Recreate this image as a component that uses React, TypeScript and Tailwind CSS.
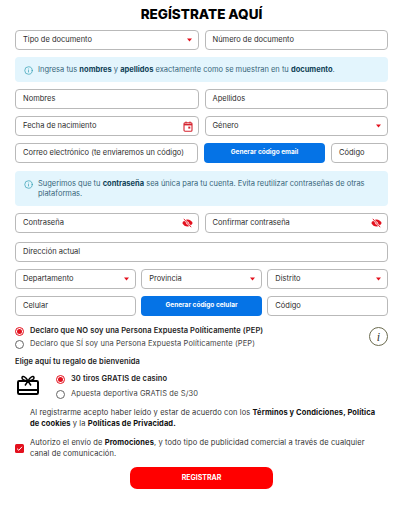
import { Info } from 'lucide-react'
import type { ReactNode } from 'react'

const FIELD = 'h-5 rounded-[4px] border border-[#b9b9b9] bg-white flex items-center justify-between pl-[7px] pr-[5px] text-[7.5px] text-[#2c2c2c]'

function Field({ label, icon, className = '' }: { label: string; icon?: ReactNode; className?: string }) {
  return (
    <div className={`${FIELD} ${className}`}>
      <span className="whitespace-nowrap">{label}</span>
      {icon}
    </div>
  )
}

const Caret = () => (
  <svg width="5" height="4" viewBox="0 0 5 4" className="mr-[1px]">
    <path d="M0 .5h5L2.500 3.500z" fill="#e3101d" />
  </svg>
)

const CalendarIcon = () => (
  <svg width="10" height="11" viewBox="0 0 10 11" fill="none">
    <rect x="1" y="1.800" width="8" height="8.400" rx="1" stroke="#d5232f" strokeWidth="1.100" />
    <path d="M1 3.600h8" stroke="#d5232f" strokeWidth="1.600" />
    <path d="M3 .5v2M7 .5v2" stroke="#d5232f" strokeWidth="1" />
    <rect x="5.300" y="5.600" width="2" height="2" fill="#d5232f" />
  </svg>
)

const EyeIcon = () => (
  <svg width="11" height="10" viewBox="0 0 11 10" fill="none">
    <path d="M.3 5C1.500 2.600 3.300 1.400 5.500 1.400S9.500 2.600 10.700 5C9.500 7.400 7.700 8.600 5.500 8.600S1.500 7.400.3 5z" fill="#e3101d" />
    <circle cx="5.500" cy="5" r="1.500" fill="#ffb3b3" />
    <path d="M1.800.8l7.400 8.400" stroke="#fff" strokeWidth="1.800" />
    <path d="M1.800.8l7.400 8.400" stroke="#e3101d" strokeWidth=".9" />
  </svg>
)

const Radio = ({ on }: { on?: boolean }) => (
  <span className={`w-[9px] h-[9px] rounded-full border flex items-center justify-center shrink-0 ${on ? 'border-[#e3101d]' : 'border-[#666666]'}`}>
    {on && <span className="w-[5px] h-[5px] rounded-full bg-[#e3101d]" />}
  </span>
)

function Notice({ children, className = '' }: { children: ReactNode; className?: string }) {
  return (
    <div className={`rounded-[4px] bg-[#e3f5fd] flex gap-[5px] pl-[9px] pr-2 text-[7.5px] leading-[10px] text-[#37657a] ${className}`}>
      <Info size={9} color="#2a9bb0" strokeWidth={1.800} className="shrink-0 mt-[1px]" />
      <p>{children}</p>
    </div>
  )
}

export default function App() {
  return (
    <div className="w-[402px] h-[512px] bg-white font-['Inter',sans-serif] pl-[15px] pr-[14px] overflow-hidden">
      <h1 className="text-center text-[13.500px] leading-[28px] font-extrabold text-black h-[30px]">REGÍSTRATE AQUÍ</h1>

      <div className="grid grid-cols-2 gap-x-[6px]">
        <Field label="Tipo de documento" icon={<Caret />} />
        <Field label="Número de documento" />
      </div>

      <Notice className="h-[25px] items-center mt-[7px]">
        Ingresa tus <b className="text-[#0f4257]">nombres</b> y <b className="text-[#0f4257]">apellidos</b> exactamente como se muestran en tu <b className="text-[#0f4257]">documento</b>.
      </Notice>

      <div className="grid grid-cols-2 gap-x-[6px] gap-y-[7px] mt-[7px]">
        <Field label="Nombres" />
        <Field label="Apellidos" />
        <Field label="Fecha de nacimiento" icon={<CalendarIcon />} />
        <Field label="Género" icon={<Caret />} />
      </div>

      <div className="flex gap-[6px] mt-[7px]">
        <Field label="Correo electrónico (te enviaremos un código)" className="w-[183px]" />
        <button className="w-[121px] h-5 rounded-[4px] bg-[#0573e6] text-white text-[6.500px] font-bold">Generar código email</button>
        <Field label="Código" className="flex-1" />
      </div>

      <Notice className="h-[35px] pt-[8px] mt-[8px]">
        Sugerimos que tu <b className="text-[#0f4257]">contraseña</b> sea única para tu cuenta. Evita reutilizar contraseñas de otras plataformas.
      </Notice>

      <div className="grid grid-cols-2 gap-x-[6px] mt-[7px]">
        <Field label="Contraseña" icon={<EyeIcon />} />
        <Field label="Confirmar contraseña" icon={<EyeIcon />} />
      </div>

      <Field label="Dirección actual" className="mt-[9px]" />

      <div className="grid grid-cols-3 gap-x-[5.500px] mt-[7px]">
        <Field label="Departamento" icon={<Caret />} />
        <Field label="Provincia" icon={<Caret />} />
        <Field label="Distrito" icon={<Caret />} />
      </div>

      <div className="grid grid-cols-3 gap-x-[5.500px] mt-[7px]">
        <Field label="Celular" />
        <button className="h-5 rounded-[4px] bg-[#0573e6] text-white text-[6.500px] font-bold">Generar código celular</button>
        <Field label="Código" />
      </div>

      <div className="flex items-center justify-between mt-[8px] text-[7.500px] tracking-[0.1px]">
        <div className="flex flex-col gap-[3px] pt-[2px]">
          <label className="flex items-center gap-[6px] h-[10px] font-semibold text-[#1b1b1b]"><Radio on />Declaro que NO soy una Persona Expuesta Políticamente (PEP)</label>
          <label className="flex items-center gap-[6px] h-[10px] text-[#444444]"><Radio />Declaro que SÍ soy una Persona Expuesta Políticamente (PEP)</label>
        </div>
        <span className="w-[19px] h-[19px] rounded-full border border-[#6b6b4f] flex items-center justify-center font-['Liberation_Serif',serif] italic text-[12px] text-[#333333]">i</span>
      </div>

      <p className="mt-[7px] text-[7.500px] leading-[12px] font-semibold text-[#1b1b1b] tracking-[0.1px]">Elige aquí tu regalo de bienvenida</p>

      <div className="flex mt-[6px] h-[32px]">
        <svg width="22" height="20" viewBox="0 0 22 20" fill="none" className="ml-[2px] mt-[1px]">
          <rect x="1" y="6" width="20" height="13" rx="1.200" stroke="#000" strokeWidth="2" />
          <path d="M1 15h20" stroke="#000" strokeWidth="2" />
          <path d="M11 6C9 1.500 5.500.500 5 2.500 4.500 4.800 8 5.500 11 6zm0 0c2-4.500 5.500-5.500 6-3.500C17.500 4.800 14 5.500 11 6zm0 0L8 10.500M11 6l3 4.500" stroke="#000" strokeWidth="1.500" />
        </svg>
        <div className="ml-[17px] flex flex-col gap-[5px] text-[7.500px] tracking-[0.1px]">
          <label className="flex items-center gap-[6px] h-[10px] font-semibold text-[#1b1b1b]"><Radio on />30 tiros GRATIS de casino</label>
          <label className="flex items-center gap-[6px] h-[10px] text-[#444444]"><Radio />Apuesta deportiva GRATIS de S/30</label>
        </div>
      </div>

      <p className="ml-[15px] mt-[1px] w-[352px] text-[7.500px] leading-[11px] text-[#333333] tracking-[0.1px]">
        Al registrarme acepto haber leído y estar de acuerdo con los <b className="text-[#111111]">Términos y Condiciones, Política de cookies</b> y la <b className="text-[#111111]">Políticas de Privacidad.</b>
      </p>

      <div className="flex items-center gap-[6px] mt-[8px]">
        <span className="w-[9px] h-[9px] rounded-[1.500px] bg-[#e3101d] flex items-center justify-center shrink-0">
          <svg width="7" height="7" viewBox="0 0 7 7" fill="none"><path d="M1 3.600 2.800 5.300 6 1.800" stroke="#fff" strokeWidth="1" /></svg>
        </span>
        <p className="text-[7.500px] leading-[11px] text-[#333333] tracking-[0.1px] w-[340px]">
          Autorizo el envío de <b className="text-[#111111]">Promociones</b>, y todo tipo de publicidad comercial a través de cualquier canal de comunicación.
        </p>
      </div>

      <div className="flex justify-center mt-[8px]">
        <button className="w-[143px] h-[22px] rounded-[7px] bg-[#ff0000] text-white text-[7px] font-bold">REGISTRAR</button>
      </div>
    </div>
  )
}
